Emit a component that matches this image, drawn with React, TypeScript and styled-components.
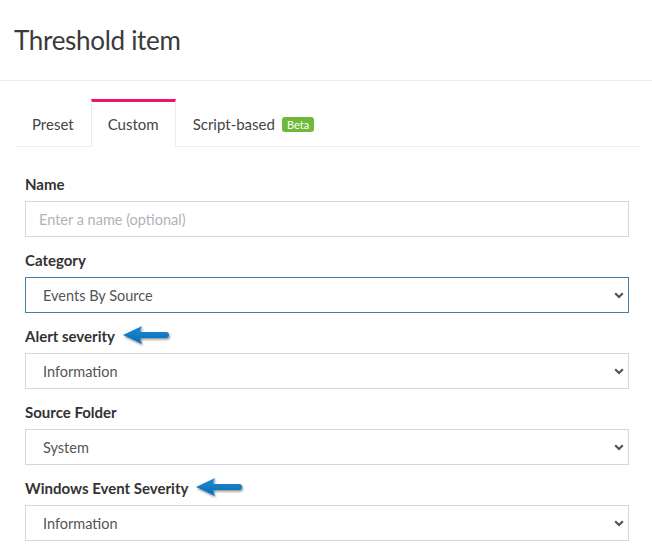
import React from "react";
import styled, { createGlobalStyle } from "styled-components";

const GlobalStyle = createGlobalStyle`
  html, body {
    margin: 0;
    padding: 0;
    background: #fff;
  }
  body {
    font-family: "Lato", "Open Sans", sans-serif;
    color: #333;
  }
`;

const Page = styled.div`
  width: 652px;
  height: 552px;
  overflow: hidden;
  background: #fff;
`;

const Header = styled.div`
  height: 81px;
  border-bottom: 1px solid #ececec;
  display: flex;
  align-items: center;
  padding: 0 14px;
  box-sizing: border-box;
`;

const Title = styled.h1`
  margin: 0;
  font-size: 26px;
  font-weight: 400;
  color: #3a3a3a;
  letter-spacing: -0.3px;
`;

const Body = styled.div`
  padding: 18px 12px 0 15px;
`;

const TabBar = styled.div`
  display: flex;
  border-bottom: 1px solid #ececec;
`;

const Tab = styled.div<{ active?: boolean }>`
  display: flex;
  align-items: center;
  gap: 7px;
  height: 44px;
  padding: 0 16px;
  font-size: 15px;
  color: #444;
  border-top: 3px solid ${(p) => (p.active ? "#f0146c" : "transparent")};
  border-left: 1px solid ${(p) => (p.active ? "#ececec" : "transparent")};
  border-right: 1px solid ${(p) => (p.active ? "#ececec" : "transparent")};
  background: ${(p) => (p.active ? "#fff" : "transparent")};
  margin-bottom: -1px;
  border-bottom: 1px solid ${(p) => (p.active ? "#fff" : "transparent")};
`;

const Badge = styled.span`
  background: #6fb83a;
  color: #fff;
  font-size: 11px;
  line-height: 15px;
  padding: 0 5px;
  border-radius: 3px;
`;

const Form = styled.div`
  padding: 27px 11px 0 10px;
`;

const Field = styled.div`
  margin-bottom: 13px;
`;

const Label = styled.div`
  display: flex;
  align-items: center;
  height: 20px;
  margin-bottom: 7px;
  font-size: 15px;
  font-weight: 700;
  color: #333;
`;

const Input = styled.input`
  display: block;
  width: 100%;
  height: 36px;
  box-sizing: border-box;
  border: 1px solid #d6d6de;
  padding: 0 13px;
  font-family: inherit;
  font-size: 14.5px;
  color: #555;
  outline: none;
  &::placeholder {
    color: #b2b2b8;
  }
`;

const SelectWrap = styled.div`
  position: relative;
`;

const Select = styled.select<{ focused?: boolean }>`
  display: block;
  width: 100%;
  height: 36px;
  box-sizing: border-box;
  border: 1px solid ${(p) => (p.focused ? "#3f80ad" : "#d6d6de")};
  border-radius: 0;
  background: #fff;
  padding: 0 30px 0 17px;
  font-family: inherit;
  font-size: 14.5px;
  color: #555;
  appearance: none;
  outline: none;
`;

const Chevron = styled.svg`
  position: absolute;
  right: 5px;
  top: 50%;
  margin-top: -3px;
  pointer-events: none;
`;

const ArrowMark = styled.svg`
  margin-left: 6px;
`;

function Arrow() {
  return (
    <ArrowMark width="52" height="24" viewBox="0 0 52 24">
      <defs>
        <filter id="sh" x="-20%" y="-40%" width="140%" height="180%">
          <feDropShadow dx="1" dy="1.5" stdDeviation="1" floodColor="#000" floodOpacity="0.45" />
        </filter>
        <linearGradient id="bl" x1="0" y1="0" x2="0" y2="1">
          <stop offset="0" stopColor="#1b8ad3" />
          <stop offset="1" stopColor="#0a6db3" />
        </linearGradient>
      </defs>
      <path
        d="M2 11 L21 2 Q19 6 19.5 8 L45 8 Q48 8 48 11 Q48 14 45 14 L19.5 14 Q19 16 21 20 Z"
        fill="url(#bl)"
        filter="url(#sh)"
      />
    </ArrowMark>
  );
}

function DropSelect({ value, focused }: { value: string; focused?: boolean }) {
  return (
    <SelectWrap>
      <Select focused={focused} defaultValue={value}>
        <option>{value}</option>
      </Select>
      <Chevron width="10" height="7" viewBox="0 0 10 7">
        <path d="M1.2 1.2 L5 5 L8.8 1.2" fill="none" stroke="#555" strokeWidth="2.2" />
      </Chevron>
    </SelectWrap>
  );
}

export default function App() {
  return (
    <Page>
      <GlobalStyle />
      <Header>
        <Title>Threshold item</Title>
      </Header>
      <Body>
        <TabBar>
          <Tab>Preset</Tab>
          <Tab active>Custom</Tab>
          <Tab>
            Script-based <Badge>Beta</Badge>
          </Tab>
        </TabBar>
        <Form>
          <Field>
            <Label>Name</Label>
            <Input placeholder="Enter a name (optional)" />
          </Field>
          <Field>
            <Label>Category</Label>
            <DropSelect value="Events By Source" focused />
          </Field>
          <Field>
            <Label>
              Alert severity
              <Arrow />
            </Label>
            <DropSelect value="Information" />
          </Field>
          <Field>
            <Label>Source Folder</Label>
            <DropSelect value="System" />
          </Field>
          <Field>
            <Label>
              Windows Event Severity
              <Arrow />
            </Label>
            <DropSelect value="Information" />
          </Field>
        </Form>
      </Body>
    </Page>
  );
}
